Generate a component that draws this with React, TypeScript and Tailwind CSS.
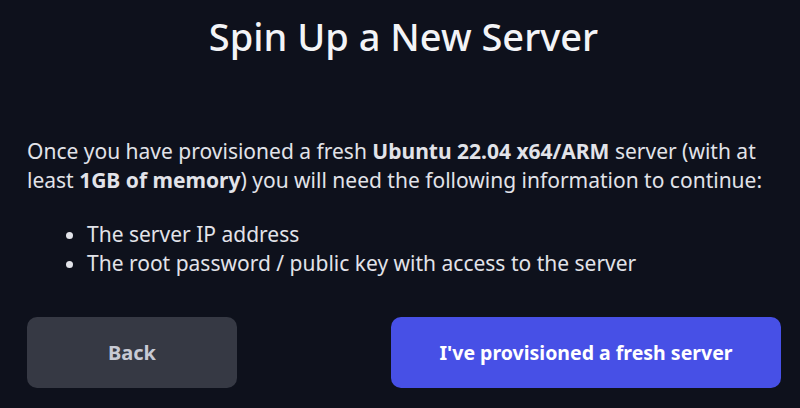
export default function App() {
  return (
    <div
      className="h-[408px] w-[800px] overflow-hidden bg-[#0e111c] text-[#e2e3e9]"
      style={{ fontFamily: '"Noto Sans", "Open Sans", sans-serif' }}
    >
      <h1 className="pl-[7px] pt-[10px] text-center text-[38px] font-medium leading-[52px] text-[#f3f4f7]">
        Spin Up a New Server
      </h1>
      <div className="mt-[75px] pl-[27px] pr-[12px]">
        <p className="text-[21px] leading-[29px]">
          Once you have provisioned a fresh{" "}
          <strong className="font-bold">Ubuntu 22.04 x64/ARM</strong> server
          (with at least <strong className="font-bold">1GB of memory</strong>)
          you will need the following information to continue:
        </p>
        <ul className="mt-[25px] list-disc pl-[60px] text-[21px] leading-[29px]">
          <li>The server IP address</li>
          <li>The root password / public key with access to the server</li>
        </ul>
      </div>
      <div className="mt-[39px] flex gap-[154px] pl-[27px]">
        <button className="h-[71px] w-[210px] rounded-[10px] bg-[#363944] text-[20px] font-bold text-[#c8cad4]">
          Back
        </button>
        <button className="h-[71px] w-[390px] rounded-[10px] bg-[#4750e6] text-[19.5px] font-bold text-white">
          I've provisioned a fresh server
        </button>
      </div>
    </div>
  );
}
